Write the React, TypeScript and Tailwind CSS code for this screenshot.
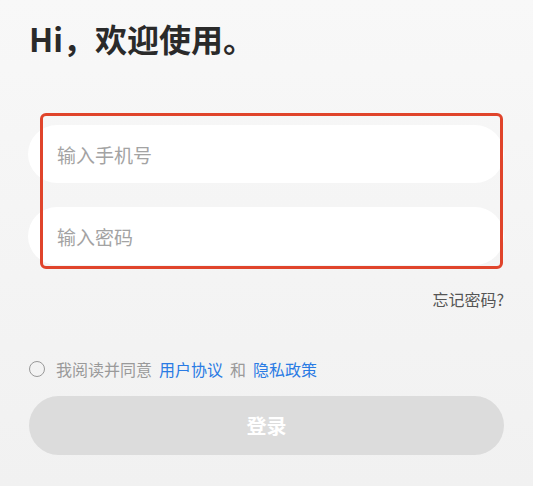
import { useState } from "react";

export default function App() {
  const [phone, setPhone] = useState("");
  const [password, setPassword] = useState("");
  const [agreed, setAgreed] = useState(false);

  return (
    <div
      className="min-h-[486px] w-full bg-gradient-to-b from-[#f8f8f8] to-[#f1f1f1] px-[29px] pt-[18px]"
      style={{ fontFamily: '"Noto Sans CJK SC", "Noto Sans", sans-serif' }}
    >
      <h1 className="text-[32px] font-bold leading-[40px] text-[#2a2a2a]">Hi，欢迎使用。</h1>

      <div className="relative mt-[67px]">
        <div className="flex flex-col gap-[24px] -ml-px">
          <input
            value={phone}
            onChange={(e) => setPhone(e.target.value)}
            placeholder="输入手机号"
            className="h-[58px] w-full rounded-full bg-white px-[29px] text-[19px] text-[#333] outline-none placeholder:text-[#a3a3a3]"
          />
          <input
            type="password"
            value={password}
            onChange={(e) => setPassword(e.target.value)}
            placeholder="输入密码"
            className="h-[58px] w-full rounded-full bg-white px-[29px] text-[19px] text-[#333] outline-none placeholder:text-[#a3a3a3]"
          />
        </div>
        {/* annotation box */}
        <div className="pointer-events-none absolute left-[11px] right-[1px] top-[-12px] bottom-[-4px] rounded-[6px] border-[3px] border-[#e0442b]" />
      </div>

      <div className="mt-[22px] flex justify-end">
        <button className="text-[16px] leading-[24px] text-[#555]">忘记密码?</button>
      </div>

      <div className="mt-[46px] flex items-center text-[16px] leading-[24px]">
        <button
          onClick={() => setAgreed(!agreed)}
          className={`h-[16px] w-[16px] rounded-full border ${agreed ? "border-[#2a7be4] bg-[#2a7be4]" : "border-[#999]"}`}
        />
        <span className="ml-[11px] text-[#9a9a9a]">我阅读并同意</span>
        <span className="ml-[7px] text-[#2a7be4]">用户协议</span>
        <span className="mx-[7px] text-[#9a9a9a]">和</span>
        <span className="text-[#2a7be4]">隐私政策</span>
      </div>

      <button className="mt-[15px] flex h-[59px] w-full items-center justify-center rounded-full bg-[#dcdcdc] text-[20px] font-bold text-white">
        登录
      </button>
    </div>
  );
}
